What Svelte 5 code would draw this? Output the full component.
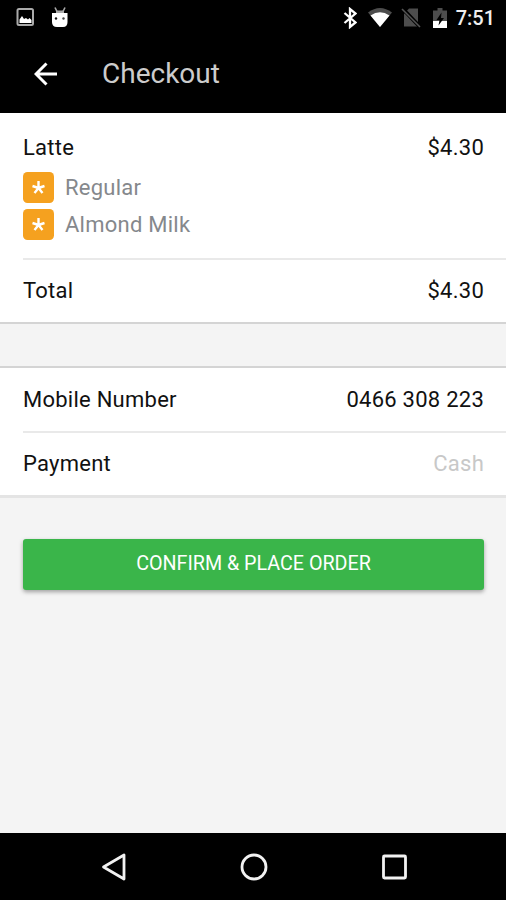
<script>
  const order = {
    name: 'Latte',
    price: '$4.30',
    options: ['Regular', 'Almond Milk'],
    total: '$4.30'
  };

  let mobile = '0466 308 223';
  let payment = 'Cash';
</script>

<div class="screen">
  <div class="statusBar">
    <div class="statusGroup notifications">
      <svg width="20" height="20" viewBox="0 0 20 20">
        <rect x="2.500" y="2" width="15.500" height="16" rx="1.500" fill="none" stroke="#aaa" stroke-width="2" />
        <path d="M4.500 16v-3.500l2.500-3.500 2 3 2-1 2 1.500 1.500-1.500 2 2v3z" fill="#fff" />
      </svg>
      <svg width="18" height="22" viewBox="0 0 18 22">
        <path d="M4 1.500l2 4M14 1.500l-2 4" stroke="#aaa" stroke-width="1.600" />
        <path d="M5 4.500h8v3H5z" fill="#aaa" />
        <path d="M1 7h15.500v9q0 5-4.500 5H6q-5 0-5-5z" fill="#fff" />
        <circle cx="5" cy="12.500" r="1.200" fill="#111" />
        <circle cx="12.500" cy="12.500" r="1.200" fill="#444" />
      </svg>
    </div>
    <div class="statusGroup system">
      <svg width="14" height="22" viewBox="0 0 14 22">
        <path d="M1.500 6l11 9.500L7 20V2l5.500 4.500L1.500 16" fill="none" stroke="#fff" stroke-width="2.300" />
      </svg>
      <svg width="26" height="22" viewBox="0 0 26 22">
        <path d="M1 5.500Q13-3.500 25 5.500L13 20z" fill="#4d4d4d" />
        <path d="M3.500 8.500Q13 2 22.500 8.500L13 20z" fill="#fff" />
      </svg>
      <svg width="20" height="22" viewBox="0 0 20 22">
        <path d="M8 1.500h9v18H3V7z" fill="#4d4d4d" />
        <path d="M2 2l17 18" stroke="#000" stroke-width="4" />
        <path d="M1 2l18 18" stroke="#555" stroke-width="1.600" />
      </svg>
      <svg width="14" height="22" viewBox="0 0 14 22">
        <path d="M0 3.500h4.500V1h5v2.500H14V21H0z" fill="#4d4d4d" />
        <path d="M0 14h14v7H0z" fill="#fff" />
        <path d="M8.500 5.500l-5 7.500h3l-1 5.500 5.500-7.500H8z" fill="#000" />
      </svg>
      <span class="clock">7:51</span>
    </div>
  </div>

  <header>
    <button class="back" aria-label="Back">
      <svg width="24" height="24" viewBox="0 0 24 24">
        <path d="M23 12H2.500M12.500 1.500L2 12l10.500 10.500" fill="none" stroke="#fff" stroke-width="3" />
      </svg>
    </button>
    <h1>Checkout</h1>
  </header>

  <main>
    <section class="card">
      <div class="item">
        <div class="line">
          <span>{order.name}</span>
          <span>{order.price}</span>
        </div>
        {#each order.options as option}
          <div class="option">
            <svg width="31" height="31" viewBox="0 0 31 31">
              <rect width="31" height="31" rx="4.500" fill="#f5a11f" />
              <path d="M15.500 16V9M15.500 16l6-2M15.500 16l4 5M15.500 16l-4 5M15.500 16l-6-2" stroke="#fff" stroke-width="2.400" />
            </svg>
            <span>{option}</span>
          </div>
        {/each}
      </div>
      <div class="row">
        <span>Total</span>
        <span>{order.total}</span>
      </div>
    </section>

    <section class="card details">
      <div class="row first">
        <span>Mobile Number</span>
        <span>{mobile}</span>
      </div>
      <div class="row">
        <span>Payment</span>
        <span class="muted">{payment}</span>
      </div>
    </section>

    <button class="confirm">CONFIRM &amp; PLACE ORDER</button>
  </main>

  <nav>
    <svg width="28" height="30" viewBox="0 0 28 30">
      <path d="M24 3v24L3.500 15z" fill="none" stroke="#f2f2f2" stroke-width="2.800" stroke-linejoin="round" />
    </svg>
    <svg width="28" height="30" viewBox="0 0 28 30">
      <circle cx="14" cy="15" r="12" fill="none" stroke="#f2f2f2" stroke-width="2.800" />
    </svg>
    <svg width="28" height="30" viewBox="0 0 28 30">
      <rect x="3.500" y="4" width="22" height="22" rx="1" fill="none" stroke="#f2f2f2" stroke-width="2.800" />
    </svg>
  </nav>
</div>

<style>
  :global(body) {
    background: #f4f4f4;
  }

  .screen {
    display: flex;
    flex-direction: column;
    height: 100vh;
    overflow: hidden;
    font-family: Roboto, "Liberation Sans", sans-serif;
    font-size: 22px;
    letter-spacing: 0.25px;
    color: #111;
  }

  svg {
    display: block;
    flex: none;
  }

  .statusBar {
    display: flex;
    justify-content: space-between;
    height: 36px;
    padding: 0 11px 0 15px;
    background: #000;
  }

  .statusGroup {
    display: flex;
    align-items: center;
  }

  .notifications {
    gap: 16px;
    padding-bottom: 3px;
  }

  .system {
    gap: 10px;
  }

  .system svg:nth-child(3) {
    margin: 0 2px 0 -2px;
  }

  .clock {
    color: #eee;
    font-size: 20px;
    font-weight: 500;
    letter-spacing: 0;
    margin-left: -1px;
  }

  header {
    display: flex;
    align-items: center;
    height: 77px;
    padding: 0 0 2px 34px;
    background: #000;
    box-sizing: border-box;
  }

  .back {
    padding: 0;
    border: none;
    background: none;
    cursor: pointer;
  }

  h1 {
    margin: 0 0 0 44px;
    color: #ccc;
    font-size: 28px;
    font-weight: 400;
    letter-spacing: 0;
  }

  main {
    flex: 1;
  }

  .card {
    padding-left: 23px;
    background: #fff;
    border-bottom: 2px solid #d4d4d4;
  }

  .details {
    margin-top: 42px;
    border-top: 2px solid #d4d4d4;
    border-bottom: 3px solid #e4e4e4;
  }

  .item {
    height: 145px;
    padding: 22px 22px 0 0;
    box-sizing: border-box;
  }

  .line {
    display: flex;
    justify-content: space-between;
    height: 37px;
    line-height: 26px;
  }

  .option {
    display: flex;
    gap: 11px;
    height: 31px;
    margin-bottom: 6px;
    line-height: 32px;
    color: #85888c;
  }

  .row {
    display: flex;
    align-items: center;
    justify-content: space-between;
    height: 64px;
    padding: 0 22px 1px 0;
    border-top: 2px solid #e9e9e9;
    box-sizing: border-box;
  }

  .row.first {
    height: 63px;
    border-top: none;
  }

  .muted {
    color: #c8c8c8;
  }

  .confirm {
    display: block;
    width: 461px;
    height: 51px;
    margin: 41px 0 0 23px;
    padding: 0 0 2px;
    border: none;
    border-radius: 3px;
    background: #3ab54a;
    box-shadow: 0 2px 4px rgba(0, 0, 0, 0.35);
    color: #fff;
    font-family: inherit;
    font-size: 19.7px;
    cursor: pointer;
  }

  nav {
    display: flex;
    justify-content: center;
    align-items: center;
    gap: 112px;
    height: 67px;
    padding-left: 1px;
    background: #000;
  }
</style>
